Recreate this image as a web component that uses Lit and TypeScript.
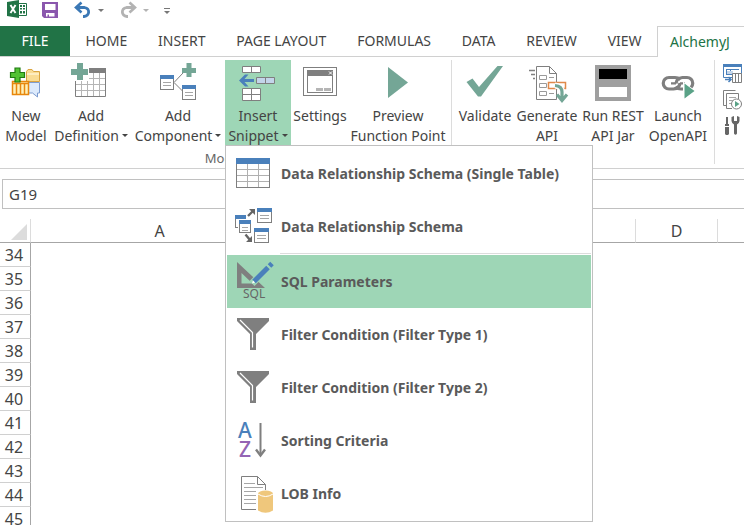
import { LitElement, html, svg, css, nothing, TemplateResult } from "lit";
import { customElement, property } from "lit/decorators.js";
import { classMap } from "lit/directives/class-map.js";

const GREEN = "#74a696";
const BLUE = "#4a80bb";
const GREY = "#7f7f7f";

const miniTable = (x: number, y: number, w: number, h: number) => svg`
  <rect x=${x + 0.5} y=${y + 0.5} width=${w - 1} height=${h - 1} fill="#fff" stroke=${GREY}/>
  <rect x=${x} y=${y} width=${w} height="4" fill=${BLUE}/>
  <path d="M${x + 3} ${y + 7.5}H${x + w - 3}M${x + 3} ${y + 10.5}H${x + w - 3}" stroke="#a6a6a6"/>`;

const funnel = svg`
  <path d="M3 2H35V5L22 18V34H16V18L3 5Z" fill=${GREY}/>
  <path d="M6 4L18.500 16.500V31.500" fill="none" stroke="#fff" stroke-width="1.200"/>`;

const icons: Record<string, TemplateResult> = {
  excel: svg`
    <path d="M10 3.500H19.500V15.500H10" fill="#fff" stroke="#217346"/>
    <path d="M13 5h2v2H13zM16 5H18v2h-2zM13 8h2v1.500H13zM16 8H18v1.500h-2zM13 11h2v2.500H13zM16 11H18v2.500h-2z" fill="#217346"/>
    <path d="M0 2L12 0V18L0 16Z" fill="#217346"/>
    <path d="M3.500 5L8.500 13M8.500 5L3.500 13" stroke="#fff" stroke-width="1.900"/>`,
  save: svg`
    <path d="M0 2H16V18H2L0 16Z" fill="#8a57ad"/>
    <path d="M3 4H13.500V10H3ZM4 13H12.500V16.500H7V14.500H5.500V16.500H4Z" fill="#fff"/>`,
  undo: svg`
    <path d="M3 7.500H10.500A5.500 4.600 0 0 1 10 16.500H9" fill="none" stroke="#3b78b5" stroke-width="2.800"/>
    <path d="M7.500 2.500L2 7.500L7.500 12.500" fill="none" stroke="#3b78b5" stroke-width="2.600"/>`,
  redo: svg`
    <path d="M15 7.500H7.500A5.500 4.600 0 0 0 8 16.500H9" fill="none" stroke="#b3b3b3" stroke-width="2.800"/>
    <path d="M10.500 2.500L16 7.500L10.500 12.500" fill="none" stroke="#b3b3b3" stroke-width="2.600"/>`,
  model: svg`
    <path d="M20.500 7.500L22 5.500H26L27.500 7.500H33.500V17.500H20.500Z" fill="#f9dc94" stroke="#d9a441"/>
    <path d="M21 10H33" stroke="#fff3cf" stroke-width="1.500"/>
    <path d="M20 18.500H33.500V29H31.500V33L26.500 29H20Z" fill="#dceafc" stroke="#7d9cd0"/>
    <path d="M6.500 17.500H22.500V30.500H6.500Z" fill="#fff0b8" stroke="#e8870c" stroke-width="1.500"/>
    <path d="M6 19.500H23M10.500 20V30M14.500 20V30M18.500 20V30" stroke="#e8870c" stroke-width="1.500"/>
    <path d="M9 4H14V8.500H18.500V13.500H14V18H9V13.500H4.500V8.500H9Z" fill="#52c234" stroke="#217c12" stroke-width="1.200"/>`,
  definition: svg`
    <path d="M4.500 17V32.500H34.500V8" fill="#fff" stroke=${GREY}/>
    <path d="M10.500 17V32M16.500 17V32M22.500 9V32M28.500 9V32M18 14.500H34M5 20.500H34M5 26.500H34" stroke="#b5b5b5"/>
    <rect x="18" y="4" width="17" height="5" fill=${GREY}/>
    <path d="M6 -1H12V5H17V11H12V16H6V11H0V5H6Z" fill=${GREEN}/>`,
  component: svg`
    <path d="M25 9L16 18.500L25 27.500" fill="none" stroke=${GREY}/>
    ${miniTable(2, 11, 14, 15)}${miniTable(24, 21, 14, 15)}
    <path d="M28.500 -1H33.500V4H38V9H33.500V13H28.500V9H24V4H28.500Z" fill=${GREEN}/>`,
  insert: svg`
    <path d="M4.500 2.500H22.500V8.500H4.500ZM13.500 2.500V8.500M4.500 24.500H22.500V36.500H4.500ZM13.500 24.500V36.500M4.500 30.500H22.500" fill="#fff" stroke=${GREY}/>
    <path d="M18.500 13.500H36.500V19.500H18.500ZM27.500 13.500V19.500" fill="#c3d5ea" stroke=${GREY}/>
    <path d="M7 10.500H10.500L6.500 15H16V18H6.500L10.500 22.500H7L1 16.500Z" fill=${BLUE}/>`,
  settings: svg`
    <rect x="3.500" y="3.500" width="33" height="28" fill="#fff" stroke=${GREY}/>
    <rect x="7.500" y="6.500" width="25" height="22" fill="#fff" stroke=${GREY}/>
    <rect x="7" y="6" width="26" height="6" fill=${GREY}/>
    <path d="M29 7.500L32 10.500M32 7.500L29 10.500" stroke="#fff"/>
    <path d="M16 24H23V27H16ZM24 24H31V27H24Z" fill="#b5b5b5"/>`,
  preview: svg`<path d="M10 3V34L30 18.500Z" fill=${GREEN}/>`,
  validate: svg`<path d="M1.500 18L7.500 14.500L14 23L32.500 2H38L16 32.500H13Z" fill=${GREEN}/>`,
  generate: svg`
    <path d="M9.500 2.500H22.500L29.500 9.500V35.500H9.500Z" fill="#fff" stroke=${GREY}/>
    <path d="M22.500 2.500V9.500H29.500" fill="none" stroke=${GREY}/>
    <path d="M2 6.500H8M4 10.500H8M6 14.500H8" stroke=${GREY} stroke-width="1.500"/>
    <path d="M12.500 11.500H19.500V15.500H12.500ZM12.500 19.500H19.500V23.500H12.500ZM12.500 27.500H19.500V31.500H12.500ZM22 13.500H27M22 29.500H27" fill="none" stroke="#9a9a9a"/>
    <rect x="21.500" y="18.500" width="17" height="6" fill="#fff" stroke="#e0894a" stroke-width="1.500"/>
    <path d="M28 21.500Q35 22 35 29V35" fill="none" stroke="#fff" stroke-width="6"/>
    <path d="M28 21.500Q35 22 35 28V35M30 30.500L35 36.500L40 30.500" fill="none" stroke=${GREEN} stroke-width="3.200"/>`,
  run: svg`
    <rect x="2" y="1" width="36" height="36" fill="#9f9f9f"/>
    <rect x="6" y="5" width="28" height="10" fill="#000"/>
    <rect x="6" y="23" width="28" height="10" fill="#fff"/>`,
  launch: svg`
    <path d="M22.500 15.500Q20 13.500 17 13.500H11A5.700 5.700 0 0 0 11 25H15.500Q21.500 24.500 22 19" fill="none" stroke=${GREY} stroke-width="3.200"/>
    <path d="M17.500 23Q20 25 23 25H29A5.700 5.700 0 0 0 29 13.500H24.500Q18.500 14 18 19.500" fill="none" stroke=${GREY} stroke-width="3.200"/>
    <path d="M13 19.300H18M22 19.300H27" stroke=${GREY} stroke-width="2.200"/>
    <path d="M25 17.500V36L38 27Z" fill="#fff"/>
    <path d="M26.500 19.500V34.500L36.500 27Z" fill="#5aa287"/>`,
  exportTable: svg`
    <path d="M.5 .5H18.500V13.500H.5Z" fill="#fff" stroke=${BLUE}/>
    <rect width="19" height="3" fill=${BLUE}/>
    <path d="M3 5.500H16M3.500 6V11M7.500 6V11M3 10.500H10" stroke=${BLUE}/>
    <rect x="4" y="7" width="6" height="3" fill="#c3d5ea"/>
    <path d="M9.500 9.500H18.500V18.500H9.500ZM12.500 9.500V18.500M15.500 9.500V18.500" fill="#fff" stroke=${GREY}/>
    <path d="M2 15.500H8M5.500 13L8 15.500L5.500 18" fill="none" stroke=${BLUE} stroke-width="1.500"/>`,
  runReport: svg`
    <path d="M.5 14V.5H12.500M.5 14V15.500H3" fill="none" stroke=${GREY}/>
    <path d="M15.500 9V3.500H3.500V18.500H9" fill="none" stroke=${GREY}/>
    <path d="M6 7.500H13M6 10.500H10M6 13.500H8" stroke="#a6a6a6"/>
    <circle cx="13.500" cy="14" r="5" fill="#fff" stroke=${GREY}/>
    <path d="M12 11V17L16.500 14Z" fill="#5aa287"/>`,
  tools: svg`
    <path d="M3 1H5V8H6V10H2V8H3ZM2 11H6V18L5 19H3L2 18Z" fill="#666"/>
    <path d="M8.500 1V5Q9 8 11 8.500V17.500Q12.500 20 14 17.500V8.500Q16 8 16.500 5V1L14 0V5H11V0Z" fill="#666"/>`,
  schemaTable: svg`
    <rect x="2.500" y="3.500" width="33" height="29" fill="#fff" stroke=${GREY}/>
    <path d="M13.500 9V32M24.500 9V32M3 14.500H35M3 20.500H35M3 26.500H35" stroke="#b0b0b0"/>
    <rect x="2" y="3" width="34" height="6" fill=${BLUE}/>`,
  schema: svg`
    ${miniTable(1, 7, 11, 13)}
    <rect x="4" y="11" width="14" height="15" fill="#fff"/>
    ${miniTable(5, 12, 12, 13)}${miniTable(23, 0, 15, 15)}${miniTable(20, 20, 15, 15)}
    <path d="M14 8L19 3M11.500 26.500L16 32" stroke="#666" stroke-width="2.400"/>
    <path d="M15 1H21V7ZM18 28V34H12Z" fill="#666"/>`,
  sql: svg`
    <path d="M3 -1L31 25H3ZM7.500 10V20.500H18.500Z" fill=${GREY} fill-rule="evenodd"/>
    <path d="M18 20.500L37.500 1" stroke="#9ed6b6" stroke-width="7"/>
    <path d="M20 18.500L34 4.500M35.500 3L38 .5" stroke=${BLUE} stroke-width="5"/>
    <path d="M18 20.500L19 17.500L21 19.500Z" fill="#fff"/>
    <text x="9" y="35" class="sql" fill="#666">SQL</text>`,
  funnel,
  sort: svg`
    <text x="4" y="16" class="az" fill=${BLUE}>A</text>
    <text x="5" y="35" class="az" fill="#9464b4">Z</text>
    <path d="M26.500 1V33" stroke=${GREY} stroke-width="2"/>
    <path d="M22 27.500L26.500 33.500L31 27.500" fill="none" stroke=${GREY} stroke-width="2.400"/>`,
  lob: svg`
    <path d="M22 34.500H7.500V1.500H23.500L31.500 9.500V15" fill="#fff" stroke=${GREY}/>
    <path d="M23.500 1.500V9.500H31.500" fill="none" stroke=${GREY}/>
    <path d="M10 8.500H21M10 12.500H29M10 16.500H22M10 20.500H22M10 24.500H22M10 28.500H22" stroke="#a6a6a6"/>
    <path d="M24 18V35.500Q31.500 40 39 35.500V18Z" fill="#efc77c"/>
    <ellipse cx="31.500" cy="18.500" rx="7.500" ry="3" fill="#efc77c"/>
    <path d="M24 19Q31.500 24 39 19" fill="none" stroke="#fff"/>`,
};

@customElement("ui-icon")
class UiIcon extends LitElement {
  @property() name = "";
  @property({ type: Number }) w = 40;
  @property({ type: Number }) h = 37;
  static styles = css`
    :host { display: block; flex: none; }
    svg { display: block; overflow: visible; }
    .sql { font: 12px "Noto Sans", sans-serif; }
    .az { font: 500 21px "Noto Sans", sans-serif; }
  `;
  render() {
    return html`<svg width=${this.w} height=${this.h} aria-hidden="true">${icons[this.name]}</svg>`;
  }
}

interface Command { id: string; lines: string[]; menu?: boolean; }

const modelCommands: Command[] = [
  { id: "model", lines: ["New", "Model"] },
  { id: "definition", lines: ["Add", "Definition"], menu: true },
  { id: "component", lines: ["Add", "Component"], menu: true },
  { id: "insert", lines: ["Insert", "Snippet"], menu: true },
  { id: "settings", lines: ["Settings"] },
  { id: "preview", lines: ["Preview", "Function Point"] },
];

const apiCommands: Command[] = [
  { id: "validate", lines: ["Validate"] },
  { id: "generate", lines: ["Generate", "API"] },
  { id: "run", lines: ["Run REST", "API Jar"] },
  { id: "launch", lines: ["Launch", "OpenAPI"] },
];

const snippets = [
  { icon: "schemaTable", label: "Data Relationship Schema (Single Table)" },
  { icon: "schema", label: "Data Relationship Schema", divider: true },
  { icon: "sql", label: "SQL Parameters", active: true },
  { icon: "funnel", label: "Filter Condition (Filter Type 1)" },
  { icon: "funnel", label: "Filter Condition (Filter Type 2)" },
  { icon: "sort", label: "Sorting Criteria" },
  { icon: "lob", label: "LOB Info" },
];

const tabs = ["HOME", "INSERT", "PAGE LAYOUT", "FORMULAS", "DATA", "REVIEW", "VIEW"];
const columns = [
  { label: "A", size: "wide" },
  { label: "", size: "covered" },
  { label: "D", size: "narrow" },
  { label: "", size: "narrow" },
];
const rows = Array.from({ length: 12 }, (_, i) => 34 + i);

@customElement("app-root")
class AppRoot extends LitElement {
  static styles = css`
    :host {
      display: flex;
      flex-direction: column;
      height: 100vh;
      overflow: hidden;
      background: #fff;
      color: #444;
      font: 14px/20px "Noto Sans", "Open Sans", sans-serif;
    }
    * { box-sizing: border-box; }
    button, input { font: inherit; color: inherit; background: none; border: 0; margin: 0; padding: 0; }
    .quick { display: flex; flex: none; align-items: flex-start; height: 26px; padding-left: 7px; }
    .quick button { display: block; }
    .quick .save, .quick .undo, .quick .redo { margin-left: 15px; }
    .quick .drop { padding: 9px 0 0 6px; color: #777; }
    .quick .drop.faint { color: #b3b3b3; }
    .quick .more { padding: 8px 0 0 15px; color: #777; }
    .caret { display: inline-block; border: 3px solid transparent; border-top-color: currentColor; border-bottom: 0; }
    .drop .caret, .more .caret { display: block; }
    .more .bar { display: block; height: 1px; margin-bottom: 2px; background: #777; }
    .tabs { display: flex; flex: none; height: 31px; }
    .tab { flex: none; padding: 0 15px; border-bottom: 1px solid #d0d0d0; white-space: nowrap; }
    .tab.file { width: 70px; background: #217346; color: #fff; }
    .tab.page { flex: 1 0 auto; }
    .tab.current { width: 87px; padding: 0 12px; border: 1px solid #d0d0d0; border-width: 1px 0 0 1px; color: #217346; text-align: left; }
    .ribbon { display: flex; flex: none; height: 112px; border-bottom: 1px solid #d0d0d0; }
    .group { display: flex; flex: none; flex-direction: column; margin: 3px 0 4px; border-right: 1px solid #dcdcdc; }
    .group.model { padding: 0 4px 0 1px; }
    .group.api { padding: 0 6px 0 2px; }
    .commands { display: flex; }
    .slot { position: relative; }
    .command { display: flex; flex-direction: column; align-items: center; width: 100%; height: 86px; padding-top: 4px; white-space: nowrap; }
    .command ui-icon { margin-bottom: 5px; }
    .command .caret { margin-left: 3px; vertical-align: 4px; }
    .command.open { background: #9ed6b6; }
    .w-model { width: 50px; }
    .w-definition { width: 80px; }
    .w-component { width: 94px; }
    .w-insert { width: 66px; }
    .w-settings { width: 58px; }
    .w-preview { width: 98px; }
    .w-validate, .w-generate { width: 62px; }
    .w-run { width: 70px; }
    .w-launch { width: 60px; }
    .caption { font-size: 13px; line-height: 18px; margin-top: 3px; text-align: center; color: #666; }
    .tools { display: flex; flex-direction: column; gap: 6px; padding: 7px 0 0 8px; }
    .menu { position: absolute; z-index: 2; top: 85px; left: 0; width: 368px; padding: 1px; border: 1px solid #c0c0c0; background: #fff; }
    .item { display: flex; align-items: center; gap: 7px; width: 100%; height: 53px; padding-left: 7px; font-weight: 700; color: #5a5a5a; white-space: nowrap; }
    .item.active { background: #9ed6b6; }
    .menu hr { height: 1px; margin: 0 0 1px 53px; border: 0; background: #dcdcdc; }
    .formula { display: flex; flex: none; height: 30px; margin: 10px 0 0 2px; }
    .formula input { border: 1px solid #c0c0c0; }
    .formula .namebox { width: 240px; padding-left: 6px; font-size: 15px; }
    .formula .fx { flex: 1; min-width: 0; border-width: 1px 0; }
    .sheet { flex: 1; min-height: 0; margin-top: 10px; overflow: hidden; }
    table { border-collapse: separate; border-spacing: 0; width: max-content; }
    th { height: 24px; padding: 0; font-size: 16px; line-height: 22px; font-weight: 400; }
    thead th, thead td { border-right: 1px solid #dcdcdc; border-bottom: 1px solid #a6a6a6; }
    tbody th { padding-right: 2px; border-right: 1px solid #a6a6a6; border-bottom: 1px solid #d0d0d0; }
    .corner { min-width: 31px; padding: 0; }
    .corner i { display: block; width: 0; margin: 3px 0 0 11px; border: 8px solid transparent; border-right-color: #dcdcdc; border-bottom-color: #dcdcdc; }
    .wide { min-width: 258px; }
    .covered { min-width: 347px; }
    .narrow { min-width: 82px; }
  `;

  private command(c: Command) {
    const open = c.id === "insert";
    return html`<div class="slot w-${c.id}">
      <button class=${classMap({ command: true, open })}>
        <ui-icon name=${c.id}></ui-icon>
        ${c.lines.map((line, i) => html`<span>${line}${c.menu && i === 1 ? html`<i class="caret"></i>` : nothing}</span>`)}
      </button>
      ${open ? this.menu() : nothing}
    </div>`;
  }

  private menu() {
    return html`<div class="menu" role="menu">
      ${snippets.map((s) => html`
        <button class=${classMap({ item: true, active: !!s.active })} role="menuitem">
          <ui-icon name=${s.icon}></ui-icon><span>${s.label}</span>
        </button>
        ${s.divider ? html`<hr>` : nothing}`)}
    </div>`;
  }

  render() {
    return html`
      <div class="quick">
        <ui-icon name="excel" w="20" h="19"></ui-icon>
        <button class="save" aria-label="Save"><ui-icon name="save" w="17" h="19"></ui-icon></button>
        <button class="undo" aria-label="Undo"><ui-icon name="undo" w="18" h="19"></ui-icon></button>
        <button class="drop" aria-label="Undo list"><i class="caret"></i></button>
        <button class="redo" aria-label="Redo"><ui-icon name="redo" w="18" h="19"></ui-icon></button>
        <button class="drop faint" aria-label="Redo list"><i class="caret"></i></button>
        <button class="more" aria-label="Customize"><i class="bar"></i><i class="caret"></i></button>
      </div>
      <nav class="tabs">
        <button class="tab file">FILE</button>
        ${tabs.map((t) => html`<button class="tab page">${t}</button>`)}
        <button class="tab current">AlchemyJ</button>
      </nav>
      <div class="ribbon">
        <div class="group model">
          <div class="commands">${modelCommands.map((c) => this.command(c))}</div>
          <div class="caption">Model</div>
        </div>
        <div class="group api">
          <div class="commands">${apiCommands.map((c) => this.command(c))}</div>
        </div>
        <div class="tools">
          <button aria-label="Export table"><ui-icon name="exportTable" w="20" h="20"></ui-icon></button>
          <button aria-label="Run report"><ui-icon name="runReport" w="20" h="20"></ui-icon></button>
          <button aria-label="Tools"><ui-icon name="tools" w="20" h="20"></ui-icon></button>
        </div>
      </div>
      <div class="formula">
        <input class="namebox" aria-label="Name box" value="G19">
        <input class="fx" aria-label="Formula">
      </div>
      <div class="sheet">
        <table>
          <thead><tr>
            <td class="corner"><i></i></td>
            ${columns.map((c) => html`<th class=${c.size} scope="col">${c.label}</th>`)}
          </tr></thead>
          <tbody>
            ${rows.map((r) => html`<tr><th scope="row">${r}</th>${columns.map(() => html`<td></td>`)}</tr>`)}
          </tbody>
        </table>
      </div>`;
  }
}
